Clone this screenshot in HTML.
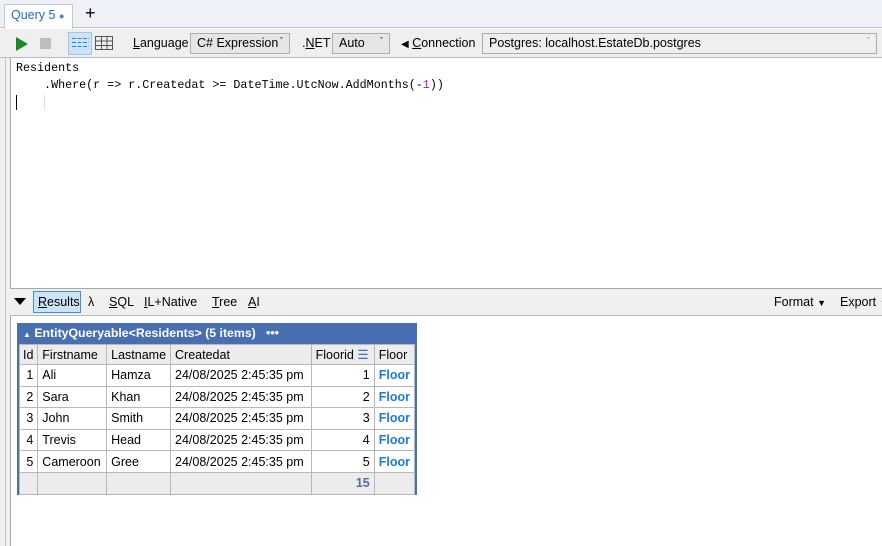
<!DOCTYPE html>
<html><head><style>
*{box-sizing:border-box;margin:0;padding:0}
body{width:882px;height:546px;overflow:hidden;background:#fff;font-family:"Segoe UI","Liberation Sans",sans-serif;font-size:12.5px;color:#000;position:relative}
.abs{position:absolute;white-space:nowrap}
.mono{font-family:"Liberation Mono","DejaVu Sans Mono",monospace;font-size:11.7px}
table{border-collapse:collapse;font-size:12.5px}
td,th{border:1px solid #b8b8b8;padding:0 4px;height:21.6px;white-space:nowrap}
th{background:#ececec;text-align:left;font-weight:normal;height:20px}
.r{text-align:right}
.lnk{color:#1a7dd4;font-weight:bold}
</style></head><body>
<div class="abs" style="left:0;top:0;width:882px;height:28px;background:#eef2f8;border-bottom:1px solid #bfbfbf"></div>
<div class="abs" style="left:4px;top:4px;width:69px;height:25px;background:#fff;border:1px solid #c8c8c8;border-bottom:none"></div>
<div class="abs" style="left:11px;top:8px;color:#1c6bc4">Query 5 <span style="font-size:9px;color:#3b82d0">●</span></div>
<div class="abs" style="left:85px;top:3px;font-size:18px">+</div>
<div class="abs" style="left:0;top:29px;width:882px;height:29px;background:#efefef;border-bottom:1px solid #bbb"></div>
<svg class="abs" style="left:15px;top:36px" width="14" height="16"><path d="M1 1 L13 8 L1 15Z" fill="#1b8a2a"/></svg>
<div class="abs" style="left:40px;top:38px;width:11px;height:11px;background:#bdbdbd"></div>
<div class="abs" style="left:68px;top:32px;width:24px;height:23px;background:#cde4f7;border:1px solid #9ec6ea"></div>
<svg class="abs" style="left:72px;top:37px" width="17" height="12"><g stroke="#3a7bd5" stroke-width="1" stroke-dasharray="4 1.5"><path d="M0 1.5H17M0 5.5H17M0 9.5H17"/></g></svg>
<svg class="abs" style="left:95px;top:36px" width="18" height="14"><g stroke="#555" fill="none"><rect x=".5" y=".5" width="17" height="13"/><path d="M6.5 0V14M12 0V14M0 5H18M0 9.5H18"/></g></svg>
<div class="abs" style="left:133px;top:36px"><u>L</u>anguage</div>
<div class="abs" style="left:190px;top:33px;width:100px;height:21px;background:#e6e6e6;border:1px solid #adadad;padding:2px 0 0 6px">C# Expression<span style="position:absolute;right:6px;top:2px;font-size:9px">ˇ</span></div>
<div class="abs" style="left:302px;top:36px">.<u>N</u>ET</div>
<div class="abs" style="left:332px;top:33px;width:58px;height:21px;background:#e6e6e6;border:1px solid #adadad;padding:2px 0 0 6px">Auto<span style="position:absolute;right:6px;top:2px;font-size:9px">ˇ</span></div>
<div class="abs" style="left:401px;top:36px"><span style="font-size:10px">◀</span> <u>C</u>onnection</div>
<div class="abs" style="left:482px;top:33px;width:395px;height:21px;background:#efefef;border:1px solid #adadad;padding:2px 0 0 6px">Postgres: localhost.EstateDb.postgres<span style="position:absolute;right:6px;top:2px;font-size:9px;color:#777">ˇ</span></div>
<div class="abs" style="left:0;top:58px;width:10px;height:488px;background:#f0f0f0"></div>
<div class="abs" style="left:5px;top:58px;width:1px;height:488px;background:#c4c4c4"></div>
<div class="abs" style="left:10px;top:58px;width:1px;height:231px;background:#a8a8a8"></div>
<div class="abs" style="left:10px;top:288px;width:872px;height:1px;background:#a8a8a8"></div>
<div class="abs mono" style="left:16px;top:60px;line-height:17px;white-space:pre">Residents
    .Where(r =&gt; r.Createdat &gt;= DateTime.UtcNow.AddMonths(-<span style="color:#a020c0">1</span>))</div>
<div class="abs" style="left:16px;top:95px;width:1px;height:15px;background:#000"></div>
<div class="abs" style="left:44px;top:95px;width:1px;height:15px;background:#e0e0e0"></div>
<div class="abs" style="left:10px;top:289px;width:872px;height:27px;background:#f0f0f0;border-bottom:1px solid #bbb"></div>
<svg class="abs" style="left:14px;top:298px" width="12" height="8"><path d="M0 0H12L6 7Z"/></svg>
<div class="abs" style="left:33px;top:291px;width:48px;height:22px;background:#cce4f7;border:1px solid #3d8ee0"></div>
<div class="abs" style="left:38px;top:295px"><u>R</u>esults</div>
<div class="abs" style="left:88px;top:295px">λ</div>
<div class="abs" style="left:109px;top:295px"><u>S</u>QL</div>
<div class="abs" style="left:144px;top:295px"><u>I</u>L+Native</div>
<div class="abs" style="left:212px;top:295px"><u>T</u>ree</div>
<div class="abs" style="left:248px;top:295px"><u>A</u>I</div>
<div class="abs" style="left:774px;top:295px">Format <span style="font-size:9px">▼</span></div>
<div class="abs" style="left:840px;top:295px">Export <span style="font-size:9px">▼</span></div>
<div class="abs" style="left:10px;top:316px;width:1px;height:230px;background:#a8a8a8"></div>
<div class="abs" style="left:17px;top:323px;width:400px;height:172px;border:2px solid #4a6fb0;background:#fff"></div>
<div class="abs" style="left:17px;top:323px;width:400px;height:21px;background:#4a6fb0;color:#fff;font-weight:bold;padding:3px 0 0 6px;font-size:12.3px"><span style="font-size:8px">▲</span> EntityQueryable&lt;Residents&gt; (5 items) &nbsp;&nbsp;•••</div>
<table class="abs" style="left:19px;top:344px;width:396px">
<tr><th style="width:19px;padding:0 3px">Id</th><th style="width:70px">Firstname</th><th style="width:62px">Lastname</th><th style="width:143px">Createdat</th><th style="width:64px">Floorid <span style="color:#3a6fc4">☰</span></th><th>Floor</th></tr>
<tr><td class="r">1</td><td>Ali</td><td>Hamza</td><td>24/08/2025 2:45:35 pm</td><td class="r">1</td><td class="lnk">Floor</td></tr>
<tr><td class="r">2</td><td>Sara</td><td>Khan</td><td>24/08/2025 2:45:35 pm</td><td class="r">2</td><td class="lnk">Floor</td></tr>
<tr><td class="r">3</td><td>John</td><td>Smith</td><td>24/08/2025 2:45:35 pm</td><td class="r">3</td><td class="lnk">Floor</td></tr>
<tr><td class="r">4</td><td>Trevis</td><td>Head</td><td>24/08/2025 2:45:35 pm</td><td class="r">4</td><td class="lnk">Floor</td></tr>
<tr><td class="r">5</td><td>Cameroon</td><td>Gree</td><td>24/08/2025 2:45:35 pm</td><td class="r">5</td><td class="lnk">Floor</td></tr>
<tr style="background:#ececec"><td></td><td></td><td></td><td></td><td class="r" style="color:#5a6a9a;font-weight:bold">15</td><td></td></tr>
</table>
</body></html>
